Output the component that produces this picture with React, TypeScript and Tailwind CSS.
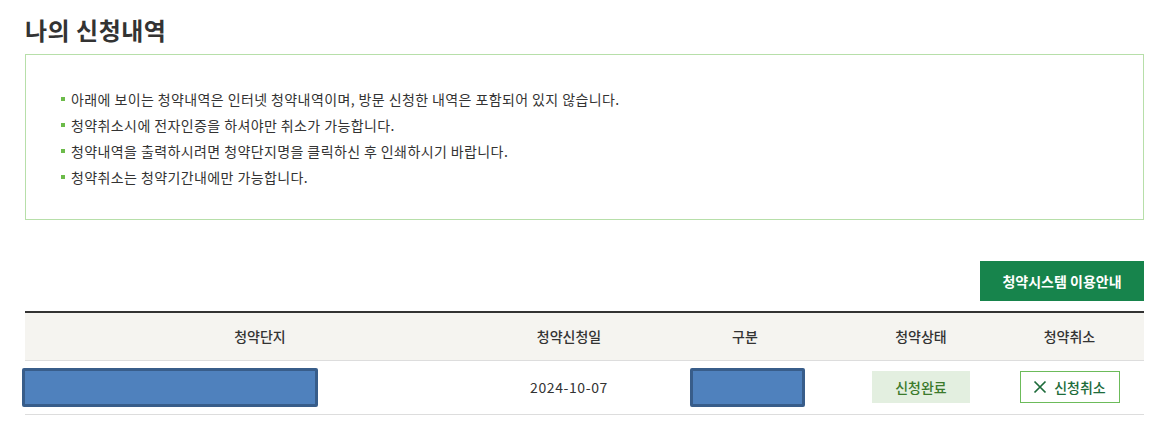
import { JSX } from "react";

const notices = [
  "아래에 보이는 청약내역은 인터넷 청약내역이며, 방문 신청한 내역은 포함되어 있지 않습니다.",
  "청약취소시에 전자인증을 하셔야만 취소가 가능합니다.",
  "청약내역을 출력하시려면 청약단지명을 클릭하신 후 인쇄하시기 바랍니다.",
  "청약취소는 청약기간내에만 가능합니다.",
];

const font = "font-['Malgun_Gothic','Noto_Sans_CJK_KR',sans-serif]";

export default function App(): JSX.Element {
  return (
    <div className={`min-h-screen bg-white pl-[25px] pr-[20px] pt-[14px] text-[#333] ${font}`}>
      <h2 className="text-[24px] font-bold leading-[32px] tracking-[0.5px] text-[#333]">
        나의 신청내역
      </h2>

      <div className="mt-[8px] h-[166px] border border-[#b7dfa9] pl-[35px] pt-[31px]">
        <ul className="flex flex-col">
          {notices.map((n) => (
            <li key={n} className="flex items-center gap-[6px] text-[14px] leading-[26px] tracking-[0.4px]">
              <span className="h-[4px] w-[4px] bg-[#6cbb4a]" />
              {n}
            </li>
          ))}
        </ul>
      </div>

      <div className="mt-[41px] flex justify-end">
        <button className="h-[40px] w-[164px] bg-[#17844c] text-[14px] font-bold text-white">
          청약시스템 이용안내
        </button>
      </div>

      <table className="mt-[10px] w-full table-fixed border-t-2 border-[#333] text-[14px]">
        <colgroup>
          <col className="w-[470px]" />
          <col className="w-[148px]" />
          <col className="w-[204px]" />
          <col className="w-[148px]" />
          <col />
        </colgroup>
        <thead>
          <tr className="h-[48px] border-b border-[#dddddd] bg-[#f5f4f0]">
            <th className="font-medium">청약단지</th>
            <th className="font-medium">청약신청일</th>
            <th className="font-medium">구분</th>
            <th className="font-medium">청약상태</th>
            <th className="font-medium">청약취소</th>
          </tr>
        </thead>
        <tbody>
          <tr className="h-[54px] border-b border-[#dddddd]">
            <td>
              <div className="ml-[-3px] h-[39px] w-[296px] rounded-[2px] border-[3px] border-[#385d8a] bg-[#4f81bd]" />
            </td>
            <td className="text-center font-normal tracking-[0.6px]">2024-10-07</td>
            <td>
              <div className="mx-auto h-[39px] w-[115px] translate-x-[2px] rounded-[2px] border-[3px] border-[#385d8a] bg-[#4f81bd]" />
            </td>
            <td>
              <div className="mx-auto flex h-[32px] w-[98px] items-center justify-center bg-[#e3efe0] font-medium text-[#3b7a2c]">
                신청완료
              </div>
            </td>
            <td>
              <button className="mx-auto flex h-[32px] w-[100px] items-center justify-center gap-[7px] border border-[#6cbb5a] bg-white font-medium text-[#1d6b3a]">
                <svg width="14" height="14" viewBox="0 0 14 14" fill="none" stroke="#1d6b3a" strokeWidth="1.7">
                  <path d="M1.5 1.5 L12.5 12.5 M12.5 1.5 L1.5 12.5" />
                </svg>
                신청취소
              </button>
            </td>
          </tr>
        </tbody>
      </table>
    </div>
  );
}
